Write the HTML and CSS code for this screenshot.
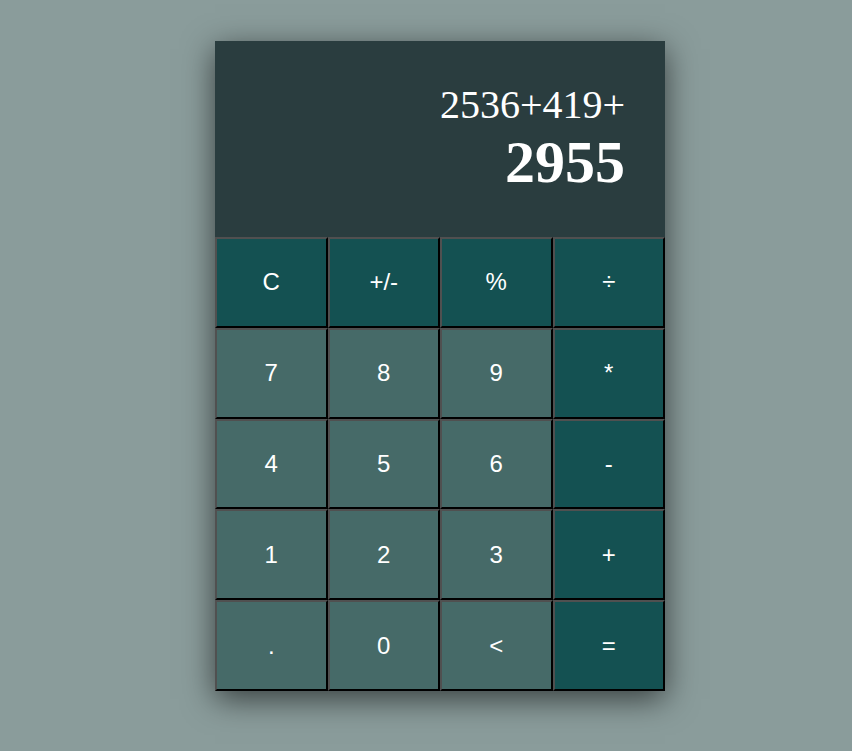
FILE: index.html
```html
<!DOCTYPE html>
<html>
<head>
<meta charset="utf-8">
<link rel="stylesheet" href="styles.css">
</head>
<body>
<div class="calc">
  <div class="display">
    <div class="expr">2536+419+</div>
    <div class="result">2955</div>
  </div>
  <div class="keys">
    <button class="key op">C</button>
    <button class="key op">+/-</button>
    <button class="key op">%</button>
    <button class="key op">÷</button>
    <button class="key num">7</button>
    <button class="key num">8</button>
    <button class="key num">9</button>
    <button class="key op">*</button>
    <button class="key num">4</button>
    <button class="key num">5</button>
    <button class="key num">6</button>
    <button class="key op">-</button>
    <button class="key num">1</button>
    <button class="key num">2</button>
    <button class="key num">3</button>
    <button class="key op">+</button>
    <button class="key num">.</button>
    <button class="key num">0</button>
    <button class="key num">&lt;</button>
    <button class="key op">=</button>
  </div>
</div>
</body>
</html>
```
FILE: styles.css
```css
html, body {
  margin: 0;
  padding: 0;
}
body {
  background: #8a9c9b;
  width: 852px;
  height: 751px;
  overflow: hidden;
}
.calc {
  width: 450px;
  margin: 41px 0 0 215px;
  box-shadow: 0 8px 30px rgba(0, 0, 0, 0.6);
  background: #2a3d3f;
}
.display {
  box-sizing: border-box;
  height: 196px;
  padding: 41px 40px 0 0;
  text-align: right;
  color: #fff;
  font-family: "Liberation Serif", "Times New Roman", serif;
}
.expr {
  font-size: 40px;
  line-height: 46px;
}
.result {
  font-size: 60px;
  font-weight: bold;
  line-height: 68px;
}
.keys {
  display: grid;
  grid-template-columns: repeat(4, 1fr);
  grid-auto-rows: 90.8px;
}
.key {
  box-sizing: border-box;
  margin: 0;
  padding: 0;
  border-style: solid;
  border-width: 2px;
  border-color: #505050 #000 #000 #505050;
  color: #fff;
  font-family: "Liberation Sans", Arial, sans-serif;
  font-size: 24px;
}
.op {
  background: #145152;
}
.num {
  background: #466a68;
}
```
